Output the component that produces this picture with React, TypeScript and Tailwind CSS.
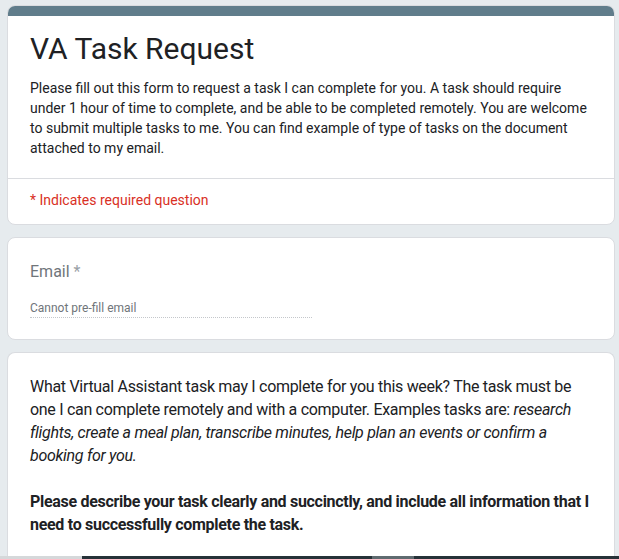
import React from "react";

const font = { fontFamily: "Roboto, 'Liberation Sans', sans-serif" };

function Card({ children, className = "" }: { children: React.ReactNode; className?: string }) {
  return (
    <div className={`bg-white rounded-lg border border-[#dadce0] ${className}`}>
      {children}
    </div>
  );
}

export default function App() {
  return (
    <div
      className="w-[619px] h-[559px] overflow-hidden bg-[#e6ebee] text-[#202124] flex flex-col"
      style={font}
    >
      <div className="flex-1 min-h-0 pl-[7px] pr-[4px] pt-[5px] flex flex-col gap-[12px]">
        {/* Header card */}
        <div className="bg-white rounded-lg border border-[#dadce0] overflow-hidden shrink-0">
          <div className="h-[10px] bg-[#607d8b]" />
          <div className="px-[22px] pt-[13px] pb-[20px]">
            <h1 className="text-[30px] leading-[40px] text-[#202124]">VA Task Request</h1>
            <p className="mt-[9px] text-[14px] leading-[20px] text-[#202124]">
              Please fill out this form to request a task I can complete for you. A task should require
              under 1 hour of time to complete, and be able to be completed remotely. You are welcome
              to submit multiple tasks to me. You can find example of type of tasks on the document
              attached to my email.
            </p>
          </div>
          <div className="border-t border-[#dadce0] px-[22px] pt-[11px] pb-[14px]">
            <p className="text-[14px] leading-[20px] text-[#d93025]">* Indicates required question</p>
          </div>
        </div>

        {/* Email card */}
        <Card className="px-[22px] pt-[22px] pb-[21px] shrink-0">
          <div className="text-[16px] leading-[24px] text-[#70757a]">
            Email <span className="text-[#9aa0a6]">*</span>
          </div>
          <div className="mt-[16px] w-[282px] border-b border-dotted border-[#c4c7cb]">
            <div className="text-[12px] leading-[17px] text-[#70757a]">Cannot pre-fill email</div>
          </div>
        </Card>

        {/* Question card */}
        <Card className="flex-1 px-[22px] pt-[22px] rounded-b-none border-b-0">
          <p className="text-[16px] leading-[23px] tracking-[-0.3px] text-[#202124]">
            What Virtual Assistant task may I complete for you this week? The task must be one I can
            complete remotely and with a computer. Examples tasks are:{" "}
            <em>
              research flights, create a meal plan, transcribe minutes, help plan an events or confirm a
              booking for you.
            </em>
          </p>
          <p className="mt-[23px] text-[16px] leading-[23px] tracking-[-0.3px] font-bold text-[#202124]">
            Please describe your task clearly and succinctly, and include all information that I need
            to successfully complete the task.
          </p>
        </Card>
      </div>

      {/* bottom strip */}
      <div className="h-[3px] shrink-0 flex">
        <div className="w-[82px] bg-[#d5d8da]" />
        <div className="w-[290px] bg-[#263238]" />
        <div className="w-[42px] bg-[#5f6b70]" />
        <div className="flex-1 bg-[#263238]" />
      </div>
    </div>
  );
}
